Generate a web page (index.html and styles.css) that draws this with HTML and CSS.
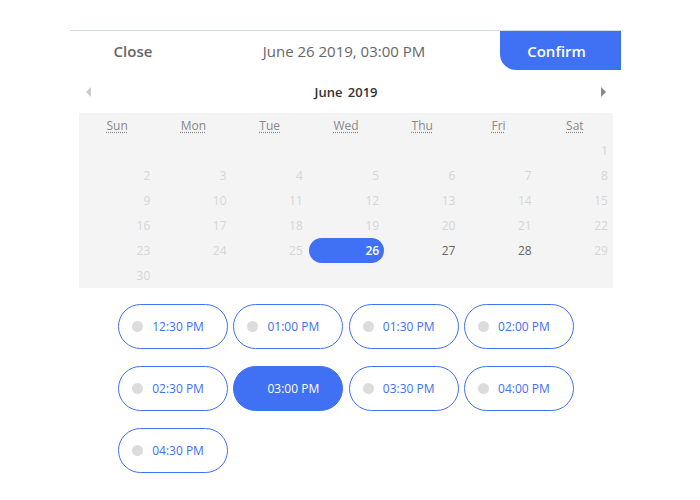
FILE: index.html
```html
<!DOCTYPE html>
<html>
<head>
<meta charset="utf-8">
<link rel="stylesheet" href="styles.css">
</head>
<body>
<div class="picker">
  <div class="header">
    <button class="close">Close</button>
    <div class="current">June 26 2019, 03:00 PM</div>
    <button class="confirm">Confirm</button>
  </div>
  <div class="nav">
    <span class="arrow arrow-left"></span>
    <span class="month">June 2019</span>
    <span class="arrow arrow-right"></span>
  </div>
  <div class="calendar">
    <div class="wd"><abbr title="Sunday">Sun</abbr></div>
    <div class="wd"><abbr title="Monday">Mon</abbr></div>
    <div class="wd"><abbr title="Tuesday">Tue</abbr></div>
    <div class="wd"><abbr title="Wednesday">Wed</abbr></div>
    <div class="wd"><abbr title="Thursday">Thu</abbr></div>
    <div class="wd"><abbr title="Friday">Fri</abbr></div>
    <div class="wd"><abbr title="Saturday">Sat</abbr></div>

    <div class="day"></div><div class="day"></div><div class="day"></div><div class="day"></div><div class="day"></div><div class="day"></div><div class="day">1</div>
    <div class="day">2</div><div class="day">3</div><div class="day">4</div><div class="day">5</div><div class="day">6</div><div class="day">7</div><div class="day">8</div>
    <div class="day">9</div><div class="day">10</div><div class="day">11</div><div class="day">12</div><div class="day">13</div><div class="day">14</div><div class="day">15</div>
    <div class="day">16</div><div class="day">17</div><div class="day">18</div><div class="day">19</div><div class="day">20</div><div class="day">21</div><div class="day">22</div>
    <div class="day">23</div><div class="day">24</div><div class="day">25</div><div class="day selected">26</div><div class="day active">27</div><div class="day active">28</div><div class="day">29</div>
    <div class="day">30</div><div class="day"></div><div class="day"></div><div class="day"></div><div class="day"></div><div class="day"></div><div class="day"></div>
  </div>
  <div class="times">
    <div class="slot"><span class="dot"></span>12:30 PM</div>
    <div class="slot"><span class="dot"></span>01:00 PM</div>
    <div class="slot"><span class="dot"></span>01:30 PM</div>
    <div class="slot"><span class="dot"></span>02:00 PM</div>
    <div class="slot"><span class="dot"></span>02:30 PM</div>
    <div class="slot chosen">03:00 PM</div>
    <div class="slot"><span class="dot"></span>03:30 PM</div>
    <div class="slot"><span class="dot"></span>04:00 PM</div>
    <div class="slot"><span class="dot"></span>04:30 PM</div>
  </div>
</div>
</body>
</html>
```
FILE: styles.css
```css
html, body {
  margin: 0;
  padding: 0;
  background: #fff;
}
body {
  font-family: "Open Sans", "Noto Sans", sans-serif;
}
.picker {
  width: 551px;
  margin: 30px 0 0 70px;
  border-top: 1px solid #d3dee3;
}
.header {
  display: flex;
  align-items: center;
  height: 39px;
}
.header button {
  font-family: inherit;
  border: none;
  background: none;
  cursor: pointer;
  padding: 0;
}
.close {
  width: 126px;
  font-size: 15px;
  font-weight: 600;
  color: #666;
  text-align: center;
}
.current {
  flex: 1;
  text-align: center;
  font-size: 15px;
  color: #666;
  padding-right: 8px;
}
.header .confirm {
  width: 121px;
  height: 39px;
  background: #4070f4;
  color: #fff;
  font-size: 15px;
  font-weight: 600;
  padding-right: 8px;
  border-bottom-left-radius: 16px;
}
.nav {
  display: flex;
  align-items: center;
  justify-content: space-between;
  height: 24px;
  margin: 10px 15px 0 16px;
}
.month {
  font-size: 13px;
  font-weight: 600;
  color: #333;
  word-spacing: 2px;
}
.arrow {
  width: 0;
  height: 0;
  border-top: 5px solid transparent;
  border-bottom: 5px solid transparent;
}
.arrow-left {
  border-right: 5px solid #ccc;
}
.arrow-right {
  border-left: 5px solid #888;
}
.calendar {
  display: grid;
  grid-template-columns: repeat(7, 1fr);
  grid-auto-rows: 25px;
  background: #f4f4f4;
  margin: 9px 8px 0 9px;
}
.wd {
  display: flex;
  align-items: center;
  justify-content: center;
  font-size: 12px;
  color: #888;
}
.wd abbr {
  text-decoration: underline dotted;
  text-underline-offset: 2px;
}
.day {
  display: flex;
  align-items: center;
  justify-content: flex-end;
  padding-right: 5px;
  font-size: 12px;
  color: #d6d6d6;
}
.day.active {
  color: #666;
}
.day.selected {
  background: #4070f4;
  color: #fff;
  font-weight: 600;
  border-radius: 13px;
  margin: 0 0 0 1px;
}
.times {
  display: grid;
  grid-template-columns: repeat(4, 110px);
  grid-auto-rows: 45px;
  column-gap: 5.3px;
  row-gap: 17px;
  justify-content: center;
  margin: 16px 8px 0 9px;
}
.slot {
  position: relative;
  display: flex;
  align-items: center;
  justify-content: center;
  box-sizing: border-box;
  border: 1px solid #4070f4;
  border-radius: 23px;
  color: #4070f4;
  font-size: 12px;
  padding-left: 10px;
}
.slot .dot {
  position: absolute;
  left: 13px;
  top: 16px;
  width: 11px;
  height: 11px;
  border-radius: 50%;
  background: #dcdcdc;
}
.slot.chosen {
  background: #4070f4;
  color: #fff;
}
```
